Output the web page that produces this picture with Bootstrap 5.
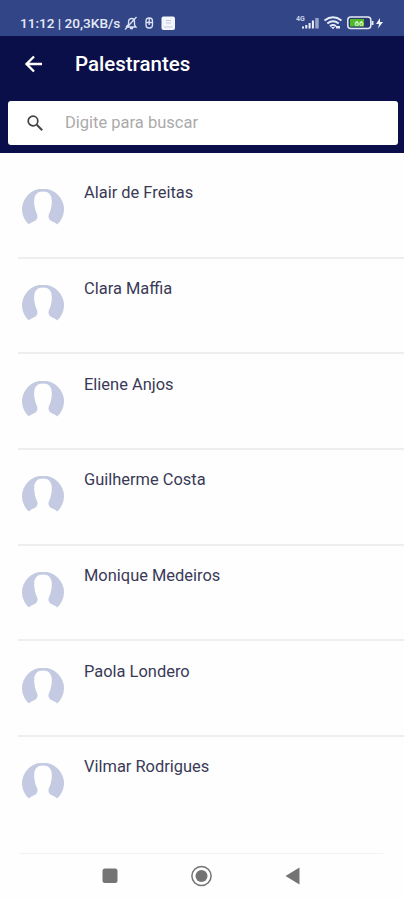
<!DOCTYPE html>
<html lang="pt-BR">
<head>
<meta charset="utf-8">
<meta name="viewport" content="width=device-width, initial-scale=1">
<title>Palestrantes</title>
<link href="https://cdn.jsdelivr.net/npm/bootstrap@5.3.0/dist/css/bootstrap.min.css" rel="stylesheet">
<style>
body{font-family:Roboto,"Liberation Sans",sans-serif;background:#fefefe}
.screen{height:900px;overflow:hidden}
.statusbar{height:36px;background:#324687;color:#e6eaf8;padding:10px 20px 0;font-size:13.6px;line-height:22px;font-weight:500}
.status-text{width:104px;white-space:nowrap}
.topbar{height:117px;background:#0b0f49;padding:0 6px 8px 8px}
.topbar h1{font-size:20.5px;font-weight:500;line-height:24px;color:#fff;margin-left:31px}
.title-row{height:65px;padding:0 0 9px 16px}
.search{height:44px;border-radius:3px;background:#fff;padding-left:18px}
.search input{font-size:16.5px;color:#555;margin-left:21px;line-height:24px}
.search input::placeholder{color:#aaa;opacity:1}
.people{padding:10px 0 0 18px}
.person{height:95.65px;border-bottom:2px solid #eee;padding:26.3px 0 0 4px}
.person:last-child{border-bottom:0}
.person-name{font-size:16.45px;line-height:24px;margin:-8px 0 0 20px;color:#3a3a56}
.sysnav{height:47px;border-top:1px solid #f3f3f3;margin:0 21px 0 19px;padding-bottom:2px}
svg{display:block;flex:none}
</style>
</head>
<body>
<svg class="d-none" aria-hidden="true">
<symbol id="avatar" viewBox="0 0 42 36"><path fill="#c3cae2" d="M7 35.6A21 20.6 0 1 1 35 35.6C34 33.5 31 33.2 28.5 31.5C26.5 30 26 27 27 25C28.5 22.5 29.5 18 29.8 14C30.3 6 27 2.500 21 2.500S11.700 6 12.200 14C12.500 18 13.500 22.500 15 25C16 27 15.500 30 13.500 31.500C11 33.200 8 33.500 7 35.600Z"/></symbol>
</svg>
<div class="screen d-flex flex-column">
<div class="statusbar d-flex align-items-center">
  <span class="status-text">11:12 | 20,3KB/s</span>
  <svg width="52" height="16" viewBox="0 0 52 16" fill="none" stroke="#dce2f5" stroke-width="1.3">
    <path d="M2 12H12L10.5 10V6.5C10.5 2.5 5 2.5 4.5 6.5V9.5L2 12M6 13.5H9M1 14.5L12.5 2"/>
    <rect x="22" y="3" width="6.5" height="10" rx="3"/><path d="M22 7.5H28.5M25.2 3V10"/>
    <rect x="37.5" y="1.5" width="13.5" height="13.5" rx="2" fill="#f3f5fc" stroke="none"/><path stroke="#bdc7dc" stroke-width="1" d="M42 5.5H47M42 8H47M40 12H48.5"/>
  </svg>
  <svg class="ms-auto" width="88" height="18" viewBox="0 0 88 18">
    <text x="0" y="7" font-size="7" font-weight="700" fill="#c9d1e9">4G</text>
    <path fill="#eef1fb" d="M6 12.500h2v2H6zM9.300 11h2v3.500h-2zM12.600 9h2v5.500h-2zM15.900 6.500h2v8h-2z"/><path fill="#98a4cb" d="M19.200 4h3.500v10.500h-3.500z"/>
    <g fill="none" stroke="#e6ebfa" stroke-width="2"><path d="M28.5 6.5Q37 0 45.5 6.5M31.3 9.5Q37 5 42.7 9.5M34 12.2Q37 10 40 12.2"/></g><path fill="#e6ebfa" d="m35 13 2 2.3 2-2.3zM40 12h4v2.5h-4z"/>
    <rect x="51.8" y="3" width="23" height="11.5" rx="3" fill="#2a3974" stroke="#e5eaf4" stroke-width="1.5"/>
    <path fill="#54b927" d="M54 5h14v7.5H54z"/><path fill="#e5eaf4" d="M75.5 7h2v4h-2z"/>
    <text x="58.5" y="12" font-size="8" font-weight="700" fill="#d8f5d0">66</text>
    <path fill="#eef1fb" d="M84 4 80 10h3l-1 4.5L87 8h-3z"/>
  </svg>
</div>
<header class="topbar">
  <div class="title-row d-flex align-items-center">
    <svg width="20" height="18" viewBox="0 0 20 18" fill="none" stroke="#fff" stroke-width="2.4"><path d="M18 9H3M10 1.5 2.5 9 10 16.5"/></svg>
    <h1 class="mb-0">Palestrantes</h1>
  </div>
  <div class="search d-flex align-items-center">
    <svg width="18" height="18" viewBox="0 0 18 18" fill="none" stroke="#444" stroke-width="1.7"><circle cx="7" cy="7" r="4.8"/><path stroke-width="2" d="m10.8 10.8 5.4 5.4"/></svg>
    <input class="border-0 bg-transparent p-0 flex-grow-1" type="text" placeholder="Digite para buscar" aria-label="Digite para buscar">
  </div>
</header>
<main class="people flex-grow-1 overflow-hidden">
  <div class="person d-flex align-items-start"><svg width="42" height="36"><use href="#avatar"/></svg><span class="person-name">Alair de Freitas</span></div>
  <div class="person d-flex align-items-start"><svg width="42" height="36"><use href="#avatar"/></svg><span class="person-name">Clara Maffia</span></div>
  <div class="person d-flex align-items-start"><svg width="42" height="36"><use href="#avatar"/></svg><span class="person-name">Eliene Anjos</span></div>
  <div class="person d-flex align-items-start"><svg width="42" height="36"><use href="#avatar"/></svg><span class="person-name">Guilherme Costa</span></div>
  <div class="person d-flex align-items-start"><svg width="42" height="36"><use href="#avatar"/></svg><span class="person-name">Monique Medeiros</span></div>
  <div class="person d-flex align-items-start"><svg width="42" height="36"><use href="#avatar"/></svg><span class="person-name">Paola Londero</span></div>
  <div class="person d-flex align-items-start"><svg width="42" height="36"><use href="#avatar"/></svg><span class="person-name">Vilmar Rodrigues</span></div>
</main>
<nav class="sysnav d-flex align-items-center justify-content-center" aria-label="Sistema">
  <svg width="200" height="24" viewBox="0 0 200 24" fill="#747474"><rect x="1.5" y="4.5" width="15" height="14.5" rx="2.5"/><circle cx="100.5" cy="12" r="9.6" fill="none" stroke="#747474" stroke-width="1.5"/><circle cx="100.5" cy="12" r="6"/><path d="M184.5 12 198.5 3.5V20.5Z"/></svg>
</nav>
</div>
<script src="https://cdn.jsdelivr.net/npm/bootstrap@5.3.0/dist/js/bootstrap.bundle.min.js"></script>
</body>
</html>
